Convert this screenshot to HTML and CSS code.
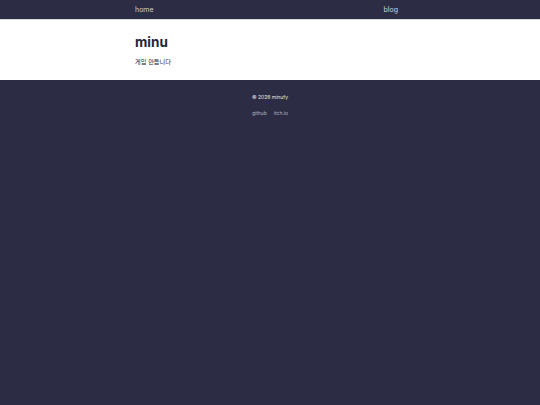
FILE: index.html
```html
<!DOCTYPE html>
<html lang="ko">
<head>
<meta charset="utf-8">
<title>minu</title>
<link rel="stylesheet" href="styles.css">
</head>
<body>
<header class="topbar">
  <nav class="nav">
    <a class="nav-link" href="#">home</a>
    <a class="nav-link" href="#">blog</a>
  </nav>
</header>
<main class="hero">
  <div class="hero-inner">
    <h1 class="title">minu</h1>
    <p class="subtitle">게임 만듭니다</p>
  </div>
</main>
<footer class="footer">
  <p class="copy">© 2026 minufy</p>
  <div class="links">
    <a class="foot-link" href="#">github</a>
    <a class="foot-link" href="#">itch.io</a>
  </div>
</footer>
</body>
</html>
```
FILE: styles.css
```css
html, body {
  margin: 0;
  padding: 0;
  height: 100%;
}
body {
  background: #2c2c44;
  font-family: Inter, "Noto Sans CJK KR", sans-serif;
  display: flex;
  flex-direction: column;
}
.topbar {
  background: #2c2c44;
  height: 20px;
  border-bottom: 1px solid #d8d8de;
  box-sizing: border-box;
}
.nav {
  width: 263px;
  margin: 0 auto 0 135px;
  display: flex;
  justify-content: space-between;
  align-items: center;
  height: 19px;
}
.nav-link {
  color: #d0d0da;
  text-decoration: none;
  font-size: 7px;
}
.hero {
  background: #ffffff;
  height: 60px;
}
.hero-inner {
  padding: 14px 0 0 135px;
}
.title {
  margin: 0;
  font-size: 13.5px;
  font-weight: 700;
  color: #25253a;
  line-height: 16px;
}
.subtitle {
  margin: 7px 0 0;
  font-size: 6.2px;
  color: #25253a;
  line-height: 9px;
}
.footer {
  flex: 1;
  background: #2c2c44;
  text-align: center;
  padding-top: 14px;
}
.copy {
  margin: 0;
  font-size: 5px;
  color: #e6e6ee;
  line-height: 7px;
}
.links {
  margin-top: 9px;
  display: flex;
  justify-content: center;
  gap: 7px;
}
.foot-link {
  font-size: 5px;
  color: #b4b4c4;
  text-decoration: none;
  line-height: 7px;
}
```
